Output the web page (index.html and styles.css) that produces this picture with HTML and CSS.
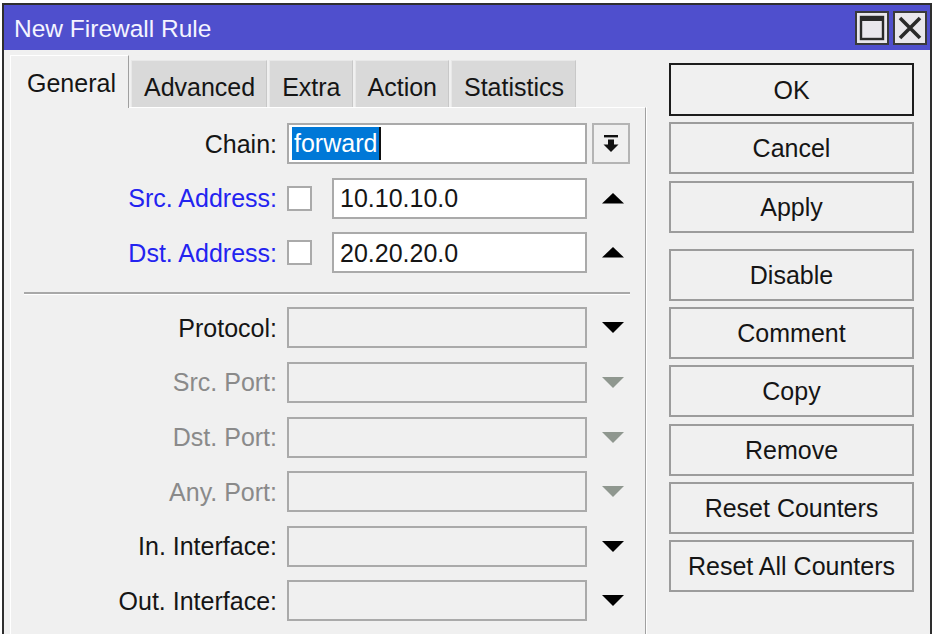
FILE: index.html
```html
<!DOCTYPE html>
<html>
<head>
<meta charset="utf-8">
<title>New Firewall Rule</title>
<link rel="stylesheet" href="styles.css">
</head>
<body>
<div class="window">
  <div class="titlebar">
    <span class="title">New Firewall Rule</span>
    <div class="tb-btns">
      <span class="tb-btn"><svg width="30" height="30" viewBox="0 0 30 30"><rect x="4" y="4" width="22" height="22" fill="none" stroke="#2a2a2a" stroke-width="2.4"/><rect x="4" y="4" width="22" height="4" fill="#2a2a2a"/></svg></span>
      <span class="tb-btn"><svg width="30" height="30" viewBox="0 0 30 30"><path d="M5 5 L25 25 M25 5 L5 25" stroke="#2a2a2a" stroke-width="3.6" fill="none"/></svg></span>
    </div>
  </div>
  <div class="content">
    <div class="main">
      <div class="tabs">
        <div class="tab active">General</div>
        <div class="tab">Advanced</div>
        <div class="tab">Extra</div>
        <div class="tab">Action</div>
        <div class="tab">Statistics</div>
      </div>
      <div class="panel">
        <div class="form">
          <div class="row">
            <div class="label">Chain:</div>
            <div class="ctrl"><div class="field white"><span class="sel">forward</span></div></div>
            <div class="side"><div class="dd-btn"><svg width="16" height="20" viewBox="0 0 16 20"><rect x="1" y="1" width="14" height="2.4" fill="#111"/><rect x="5" y="5.5" width="6" height="6" fill="#111"/><polygon points="0.5,10.5 15.5,10.5 8,18" fill="#111"/></svg></div></div>
          </div>
          <div class="row">
            <div class="label blue">Src. Address:</div>
            <div class="ctrl"><span class="check"></span><div class="field white pad">10.10.10.0</div></div>
            <div class="side"><svg class="tri" width="22" height="11" viewBox="0 0 22 11"><polygon points="0,10.5 11,0 22,10.5" fill="#000"/></svg></div>
          </div>
          <div class="row">
            <div class="label blue">Dst. Address:</div>
            <div class="ctrl"><span class="check"></span><div class="field white pad">20.20.20.0</div></div>
            <div class="side"><svg class="tri" width="22" height="11" viewBox="0 0 22 11"><polygon points="0,10.5 11,0 22,10.5" fill="#000"/></svg></div>
          </div>
          <div class="sep"></div>
          <div class="row">
            <div class="label">Protocol:</div>
            <div class="ctrl"><div class="field"></div></div>
            <div class="side"><svg class="tri" width="22" height="11" viewBox="0 0 22 11"><polygon points="0,0 22,0 11,11" fill="#000"/></svg></div>
          </div>
          <div class="row">
            <div class="label grey">Src. Port:</div>
            <div class="ctrl"><div class="field"></div></div>
            <div class="side"><svg class="tri" width="22" height="11" viewBox="0 0 22 11"><polygon points="0,0 22,0 11,11" fill="#8f978f"/></svg></div>
          </div>
          <div class="row">
            <div class="label grey">Dst. Port:</div>
            <div class="ctrl"><div class="field"></div></div>
            <div class="side"><svg class="tri" width="22" height="11" viewBox="0 0 22 11"><polygon points="0,0 22,0 11,11" fill="#8f978f"/></svg></div>
          </div>
          <div class="row">
            <div class="label grey">Any. Port:</div>
            <div class="ctrl"><div class="field"></div></div>
            <div class="side"><svg class="tri" width="22" height="11" viewBox="0 0 22 11"><polygon points="0,0 22,0 11,11" fill="#8f978f"/></svg></div>
          </div>
          <div class="row">
            <div class="label">In. Interface:</div>
            <div class="ctrl"><div class="field"></div></div>
            <div class="side"><svg class="tri" width="22" height="11" viewBox="0 0 22 11"><polygon points="0,0 22,0 11,11" fill="#000"/></svg></div>
          </div>
          <div class="row">
            <div class="label">Out. Interface:</div>
            <div class="ctrl"><div class="field"></div></div>
            <div class="side"><svg class="tri" width="22" height="11" viewBox="0 0 22 11"><polygon points="0,0 22,0 11,11" fill="#000"/></svg></div>
          </div>
        </div>
      </div>
    </div>
    <div class="actions">
      <div class="btn default">OK</div>
      <div class="btn">Cancel</div>
      <div class="btn">Apply</div>
      <div class="btn group">Disable</div>
      <div class="btn">Comment</div>
      <div class="btn">Copy</div>
      <div class="btn">Remove</div>
      <div class="btn">Reset Counters</div>
      <div class="btn">Reset All Counters</div>
    </div>
  </div>
</div>
</body>
</html>
```
FILE: styles.css
```css
html, body {
  margin: 0;
  padding: 0;
  background: #ffffff;
  overflow: hidden;
}
body {
  font-family: "Liberation Sans", Arial, sans-serif;
  font-size: 25px;
  color: #151515;
}
.window {
  margin: 3px 0 0 2px;
  width: 930px;
  height: 640px;
  box-sizing: border-box;
  border: 2px solid #2e2e2e;
  border-bottom: none;
  background: #f0f0f0;
  display: flex;
  flex-direction: column;
}
.titlebar {
  height: 45px;
  flex: none;
  background: #4f4fcd;
  display: flex;
  align-items: center;
  justify-content: space-between;
  padding-left: 10px;
  padding-right: 3px;
}
.title {
  color: #f4f4ff;
  font-size: 24.5px;
  line-height: 28px;
  margin-top: 3px;
}
.tb-btns {
  display: flex;
  gap: 4px;
}
.tb-btn {
  width: 34px;
  height: 34px;
  box-sizing: border-box;
  background: #e9e7ec;
  border: 2px solid #3a3a3a;
  display: flex;
  align-items: center;
  justify-content: center;
}
.content {
  display: flex;
  flex: 1;
}
.main {
  padding: 5px 0 0 6px;
  display: flex;
  flex-direction: column;
}
.tabs {
  display: flex;
  align-items: flex-end;
  gap: 2px;
  height: 52px;
}
.tab {
  box-sizing: border-box;
  height: 47px;
  padding: 12px 11px 0 12px;
  line-height: 28px;
  background: #d9d9d9;
  border-top: 1px solid #e8e8e8;
  border-left: 1px solid #e8e8e8;
  border-right: 1px solid #c8c8c8;
}
.tab.active {
  height: 53px;
  margin-bottom: -1px;
  padding: 13px 12px 0 16px;
  background: #f0f0f0;
  border-top: 1px solid #ffffff;
  border-left: 1px solid #ffffff;
  border-right: 1px solid #a0a0a0;
  position: relative;
  z-index: 1;
}
.panel {
  width: 636px;
  box-sizing: border-box;
  flex: 1;
  border-top: 1px solid #ffffff;
  border-left: 1px solid #ffffff;
  border-right: 1px solid #a0a0a0;
  box-shadow: 1px 0 0 #ffffff;
}
.form {
  padding-top: 15px;
  display: flex;
  flex-direction: column;
  gap: 13.6px;
}
.row {
  display: grid;
  grid-template-columns: 266px 300px 38px;
  column-gap: 10px;
  height: 41px;
  align-items: center;
}
.row .side {
  margin-left: -6px;
  display: flex;
  justify-content: center;
  align-items: center;
  height: 41px;
}
.label {
  text-align: right;
  line-height: 28px;
  white-space: nowrap;
  color: #151515;
}
.label.blue { color: #2323f0; }
.label.grey { color: #8a8a8a; }
.ctrl {
  display: flex;
  align-items: center;
  gap: 20px;
  height: 41px;
}
.field {
  flex: 1;
  height: 41px;
  box-sizing: border-box;
  border: 2px solid #aaaaaa;
  background: #f0f0f0;
  display: flex;
  align-items: center;
  padding-left: 3px;
  line-height: 28px;
}
.field.white { background: #ffffff; }
.field.pad { padding-left: 6px; color: #151515; }
.sel {
  background: #0078d7;
  color: #ffffff;
  line-height: 33px;
  padding: 0 2px 0 2px;
  border-right: 2px solid #111;
}
.check {
  width: 25px;
  height: 25px;
  box-sizing: border-box;
  border: 2px solid #aaaaaa;
  background: #ffffff;
  flex: none;
}
.dd-btn {
  width: 38px;
  height: 41px;
  box-sizing: border-box;
  border: 2px solid #b4b4b4;
  background: #f0f0f0;
  display: flex;
  align-items: center;
  justify-content: center;
  margin-left: -4px;
}
.tri { display: block; }
.sep {
  margin: 5px 15px -1px 13px;
  border-top: 2px solid #a8a8a8;
  border-bottom: 1px solid #ffffff;
  height: 0;
}
.actions {
  margin-left: 23px;
  padding-top: 13px;
  width: 245px;
  display: flex;
  flex-direction: column;
  gap: 6.3px;
}
.btn {
  height: 52px;
  box-sizing: border-box;
  border: 2px solid #9c9c9c;
  background: #f0f0f0;
  display: flex;
  align-items: center;
  justify-content: center;
  line-height: 28px;
  color: #151515;
}
.btn.default {
  height: 53px;
  border: 2px solid #1c1c1c;
}
.btn.group { margin-top: 10px; }
```
